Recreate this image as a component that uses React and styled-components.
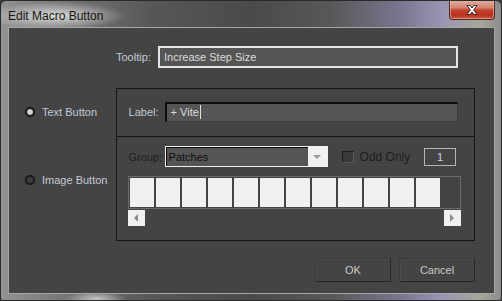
import React from 'react';
import styled, { createGlobalStyle } from 'styled-components';

const GlobalStyle = createGlobalStyle`
  html, body {
    margin: 0;
    padding: 0;
    background: #3a3a3a;
  }
  body {
    font-family: "Liberation Sans", Arial, sans-serif;
    font-size: 11px;
  }
`;

const Window = styled.div`
  width: 502px;
  height: 301px;
  box-sizing: border-box;
  padding: 0 6px 6px 7px;
  display: flex;
  flex-direction: column;
  border: 1px solid #2a2a2a;
  border-radius: 6px 6px 3px 3px;
  background:
    radial-gradient(ellipse 70px 14px at 55px 15px, rgba(235, 235, 235, 0.85), rgba(235, 235, 235, 0) 100%),
    radial-gradient(ellipse 30px 8px at 95px 298px, rgba(220, 220, 220, 0.8), rgba(220, 220, 220, 0) 100%),
    linear-gradient(90deg, #929292 0%, #747474 14%, #575757 30%, #4a4a4a 50%, #585858 66%, #7a7690 80%, #9a94b4 88%, #a4a898 96%, #8c8c8c 100%);
  overflow: hidden;
`;

const TitleBar = styled.div`
  height: 26px;
  display: flex;
  align-items: flex-start;
  justify-content: space-between;
`;

const Title = styled.div`
  font-size: 12px;
  color: #141414;
  padding-top: 8px;
`;

const CloseButton = styled.div`
  width: 46px;
  height: 20px;
  margin-top: -1px;
  box-sizing: border-box;
  border: 1px solid #4a2a26;
  border-top: none;
  border-radius: 0 0 4px 4px;
  background: linear-gradient(180deg, #e2b0a4 0%, #d28470 40%, #c0402a 55%, #b8341f 80%, #cc5a3e 100%);
  box-shadow: inset 0 0 0 1px rgba(255, 220, 210, 0.45);
  display: flex;
  align-items: center;
  justify-content: center;
`;

const Client = styled.div`
  flex: 1;
  background: #444444;
  border: 1px solid #a6a6a6;
  display: flex;
  flex-direction: column;
  padding: 18px 19px 0 0;
`;

const Row = styled.div`
  display: flex;
  align-items: center;
  padding-left: ${(p) => p.$indent || 0}px;
`;

const FieldLabel = styled.div`
  width: ${(p) => p.$width}px;
  flex: none;
  color: ${(p) => (p.$disabled ? '#1e1e1e' : '#c2cad6')};
`;

const TextField = styled.div`
  width: ${(p) => p.$width}px;
  height: ${(p) => p.$height}px;
  box-sizing: border-box;
  background: #555555;
  color: #dcdcdc;
  display: flex;
  align-items: center;
  padding-left: 4px;
  border: ${(p) => (p.$focused ? '2px solid #e6e6e6' : '1px solid #3a3a3a')};
  ${(p) => !p.$focused && `border-top: 2px solid #0c0c0c; border-left: 2px solid #0c0c0c;`}
`;

const Caret = styled.span`
  display: inline-block;
  width: 1px;
  height: 14px;
  background: #e4e4e4;
  margin-left: 1px;
`;

const Middle = styled.div`
  display: flex;
  margin-top: 20px;
`;

const RadioColumn = styled.div`
  width: 107px;
  display: flex;
  flex-direction: column;
  gap: 54px;
  padding: 17px 0 0 16px;
  box-sizing: border-box;
`;

const RadioItem = styled.div`
  display: flex;
  align-items: center;
  height: 14px;
  gap: 7px;
  color: #c2cad6;
`;

const RadioDot = styled.span`
  width: 10px;
  height: 10px;
  box-sizing: border-box;
  border-radius: 50%;
  border: 2px solid #1c1c1c;
  background: ${(p) => (p.$checked ? 'radial-gradient(circle, #e8e8e8 0%, #a8a8a8 100%)' : '#3e3e3e')};
  box-shadow: 0 0 1px rgba(0, 0, 0, 0.6);
`;

const Panel = styled.div`
  width: 361px;
  height: 153px;
  box-sizing: border-box;
  border: 1px solid #161616;
  display: flex;
  flex-direction: column;
`;

const PanelTop = styled.div`
  height: 48px;
  border-bottom: 1px solid #161616;
  display: flex;
  align-items: center;
  padding-left: 12px;
  padding-bottom: 2px;
  box-sizing: border-box;
`;

const PanelBottom = styled.div`
  flex: 1;
  padding: 9px 0 0 11px;
  display: flex;
  flex-direction: column;
`;

const GroupRow = styled.div`
  display: flex;
  align-items: center;
  padding-left: 1px;
`;

const Combo = styled.div`
  width: 163px;
  height: 21px;
  box-sizing: border-box;
  border: 1px solid #f0f0f0;
  display: flex;
  background: #555555;
`;

const ComboText = styled.div`
  flex: 1;
  display: flex;
  align-items: center;
  padding-left: 2px;
  color: #101010;
  border-top: 1px solid #0c0c0c;
  border-left: 1px solid #0c0c0c;
`;

const ComboArrow = styled.div`
  width: 19px;
  background: #f0f0f0;
  display: flex;
  align-items: center;
  justify-content: center;

  &::after {
    content: '';
    border-left: 4px solid transparent;
    border-right: 4px solid transparent;
    border-top: 4px solid #9a9a9a;
  }
`;

const CheckBox = styled.span`
  width: 12px;
  height: 12px;
  box-sizing: border-box;
  border: 1px solid #1a1a1a;
  border-right-color: #5a5a5a;
  border-bottom-color: #5a5a5a;
  background: #3a3a3a;
  margin-left: 14px;
`;

const CheckLabel = styled.span`
  color: #1e1e1e;
  margin-left: 6px;
  font-size: 12px;
`;

const NumberBox = styled.div`
  width: 32px;
  height: 18px;
  box-sizing: border-box;
  margin-left: auto;
  margin-right: 18px;
  border: 1px solid #b4b4b4;
  color: #ccd6e6;
  display: flex;
  align-items: center;
  justify-content: center;
`;

const Strip = styled.div`
  width: 333px;
  height: 33px;
  box-sizing: border-box;
  margin-top: 9px;
  border: 1px solid #6a6a6a;
  display: flex;
  gap: 2px;
  padding: 1px;
`;

const Swatch = styled.div`
  width: 24px;
  height: 100%;
  background: #f0f0f0;
`;

const ScrollRow = styled.div`
  width: 333px;
  display: flex;
  justify-content: space-between;
  margin-top: 1px;
`;

const ScrollButton = styled.div`
  width: 17px;
  height: 16px;
  background: #f0f0f0;
  display: flex;
  align-items: center;
  justify-content: center;

  &::after {
    content: '';
    border-top: 4px solid transparent;
    border-bottom: 4px solid transparent;
    ${(p) => (p.$dir === 'left' ? 'border-right: 4px solid #8a8a8a;' : 'border-left: 4px solid #8a8a8a;')}
  }
`;

const ButtonRow = styled.div`
  display: flex;
  justify-content: flex-end;
  gap: 8px;
  margin-top: 17px;
`;

const DialogButton = styled.div`
  width: 76px;
  height: 24px;
  box-sizing: border-box;
  border: 1px solid #262626;
  border-top-color: #3a3a3a;
  border-left-color: #3a3a3a;
  box-shadow: inset 1px 1px 0 #4c4c4c;
  background: #444444;
  color: #c8c8c8;
  display: flex;
  align-items: center;
  justify-content: center;
`;

const CloseGlyph = () => (
  <svg width="16" height="12" viewBox="0 0 16 12">
    <path
      d="M3 1.5 L6 1.5 L8 4 L10 1.5 L13 1.5 L9.6 6 L13 10.5 L10 10.5 L8 8 L6 10.5 L3 10.5 L6.4 6 Z"
      fill="#ffffff"
      stroke="#3a2a2a"
      strokeWidth="1"
      strokeLinejoin="round"
    />
  </svg>
);

const swatches = Array.from({ length: 12 }, (_, i) => i);

export default function App() {
  return (
    <>
      <GlobalStyle />
      <Window>
        <TitleBar>
          <Title>Edit Macro Button</Title>
          <CloseButton>
            <CloseGlyph />
          </CloseButton>
        </TitleBar>
        <Client>
          <Row $indent={107}>
            <FieldLabel $width={42}>Tooltip:</FieldLabel>
            <TextField $width={300} $height={22} $focused>
              Increase Step Size
            </TextField>
          </Row>

          <Middle>
            <RadioColumn>
              <RadioItem>
                <RadioDot $checked />
                Text Button
              </RadioItem>
              <RadioItem>
                <RadioDot />
                Image Button
              </RadioItem>
            </RadioColumn>

            <Panel>
              <PanelTop>
                <FieldLabel $width={36}>Label:</FieldLabel>
                <TextField $width={293} $height={20}>
                  + Vite<Caret />
                </TextField>
              </PanelTop>
              <PanelBottom>
                <GroupRow>
                  <FieldLabel $width={36} $disabled>Group:</FieldLabel>
                  <Combo>
                    <ComboText>Patches</ComboText>
                    <ComboArrow />
                  </Combo>
                  <CheckBox />
                  <CheckLabel>Odd Only</CheckLabel>
                  <NumberBox>1</NumberBox>
                </GroupRow>
                <Strip>
                  {swatches.map((i) => (
                    <Swatch key={i} />
                  ))}
                </Strip>
                <ScrollRow>
                  <ScrollButton $dir="left" />
                  <ScrollButton $dir="right" />
                </ScrollRow>
              </PanelBottom>
            </Panel>
          </Middle>

          <ButtonRow>
            <DialogButton>OK</DialogButton>
            <DialogButton>Cancel</DialogButton>
          </ButtonRow>
        </Client>
      </Window>
    </>
  );
}
